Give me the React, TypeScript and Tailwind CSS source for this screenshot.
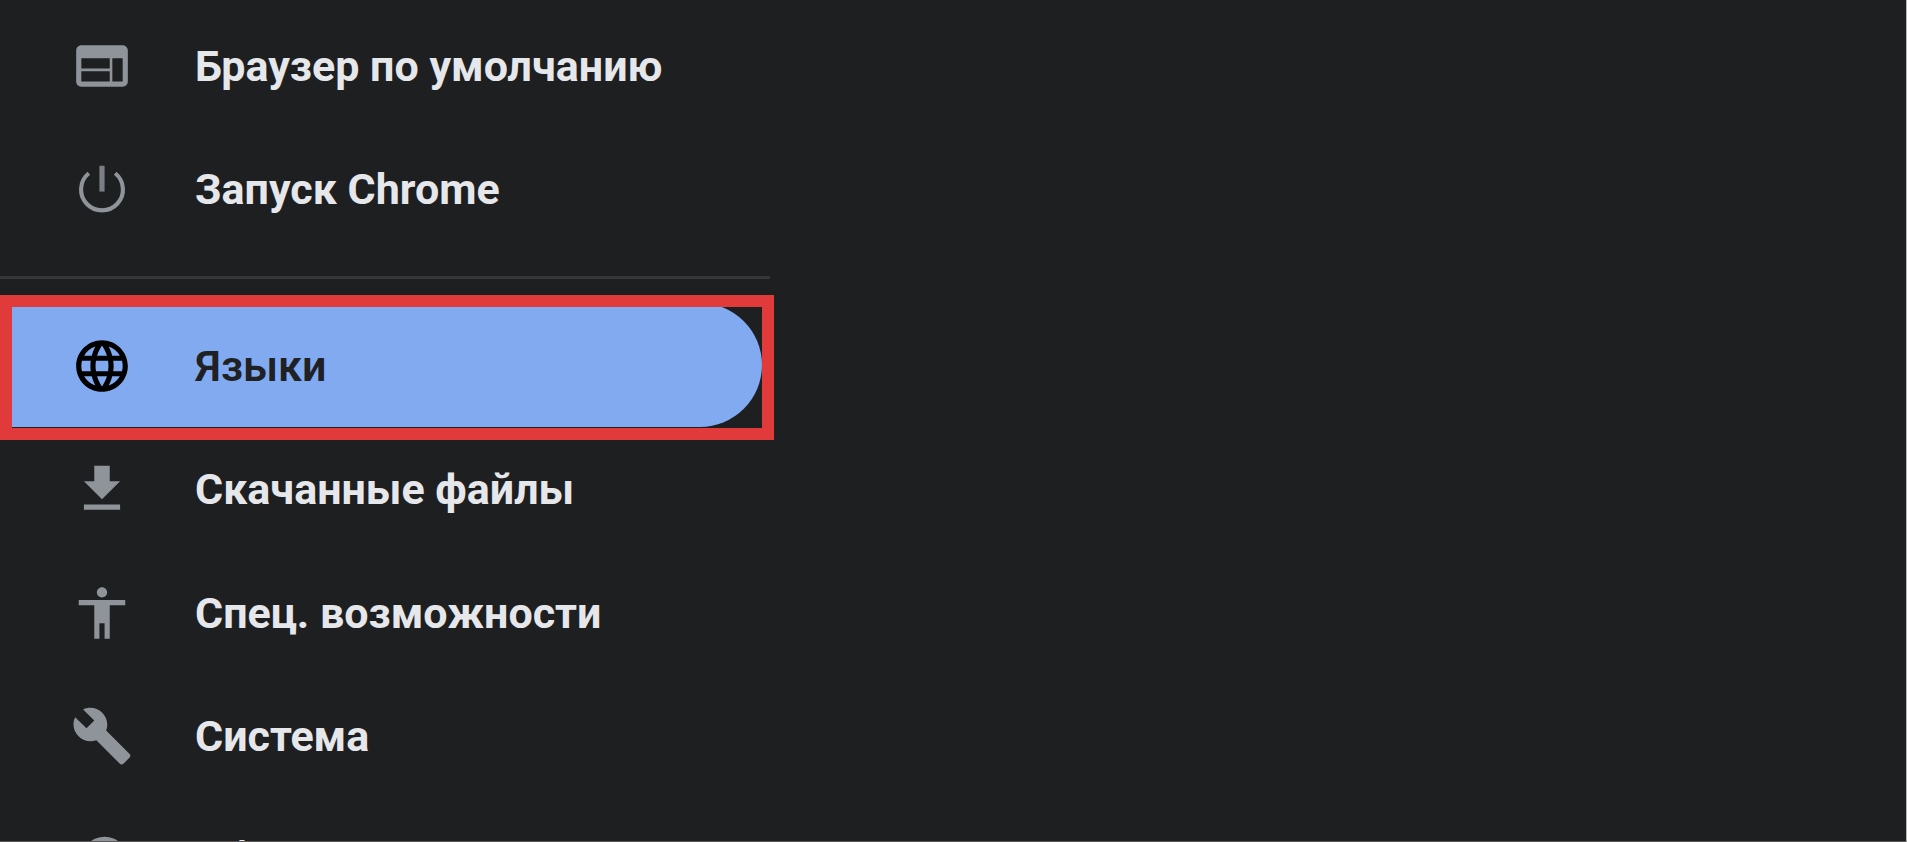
import type { ComponentType } from 'react'
import {
  MdAccessibility,
  MdBuild,
  MdFileDownload,
  MdLanguage,
  MdRestore,
  MdWeb,
} from 'react-icons/md'

type Item = {
  icon: ComponentType<{ className?: string }>
  label: string
  selected?: boolean
}

// Thinner ring than the one in the Material set
function PowerIcon({ className }: { className?: string }) {
  return (
    <svg viewBox="0 0 24 24" fill="none" stroke="currentColor" className={className}>
      <path d="M12 3v10" strokeWidth="2" className="text-[#7b7f85]" />
      <path d="M17.1 5.9a8.1 8.1 0 1 1-10.2 0" strokeWidth="1.6" />
    </svg>
  )
}

const topItems: Item[] = [
  { icon: MdWeb, label: 'Браузер по умолчанию' },
  { icon: PowerIcon, label: 'Запуск Chrome' },
]

const bottomItems: Item[] = [
  { icon: MdLanguage, label: 'Языки', selected: true },
  { icon: MdFileDownload, label: 'Скачанные файлы' },
  { icon: MdAccessibility, label: 'Спец. возможности' },
  { icon: MdBuild, label: 'Система' },
  { icon: MdRestore, label: 'Сбросить настройки' },
]

function MenuItem({ icon: Icon, label, selected }: Item) {
  return (
    <a
      className={`group relative flex h-[123.5px] shrink-0 items-center gap-[62px] pl-[71px] ${
        selected
          ? 'w-[762px] rounded-r-full bg-[#82aaf1] font-semibold text-[#202124]'
          : 'font-bold text-[#e6e7ea]'
      }`}
    >
      <Icon className={`mt-0.5 size-[62px] shrink-0 ${selected ? 'text-black' : 'text-[#8f949b]'}`} />
      <span className="whitespace-nowrap pt-0.5 group-last:pt-0 group-last:pb-0.5">{label}</span>
      {selected && (
        <span className="absolute -top-2 left-0 h-[145px] w-[774px] border-12 border-[#e13a3a]" />
      )}
    </a>
  )
}

export default function App() {
  return (
    <div className="h-[842px] overflow-hidden border-r border-b border-r-[#b5b5b5] border-b-[#5b5757] bg-[#1e1f21] font-['Roboto',sans-serif] text-[43px]">
      <nav className="flex flex-col pt-[3px]">
        {topItems.map((item) => (
          <MenuItem key={item.label} {...item} />
        ))}
        <div className="mt-[26px] mb-6 h-[3px] w-[770px] shrink-0 bg-[#35363a]" />
        {bottomItems.map((item) => (
          <MenuItem key={item.label} {...item} />
        ))}
      </nav>
    </div>
  )
}
